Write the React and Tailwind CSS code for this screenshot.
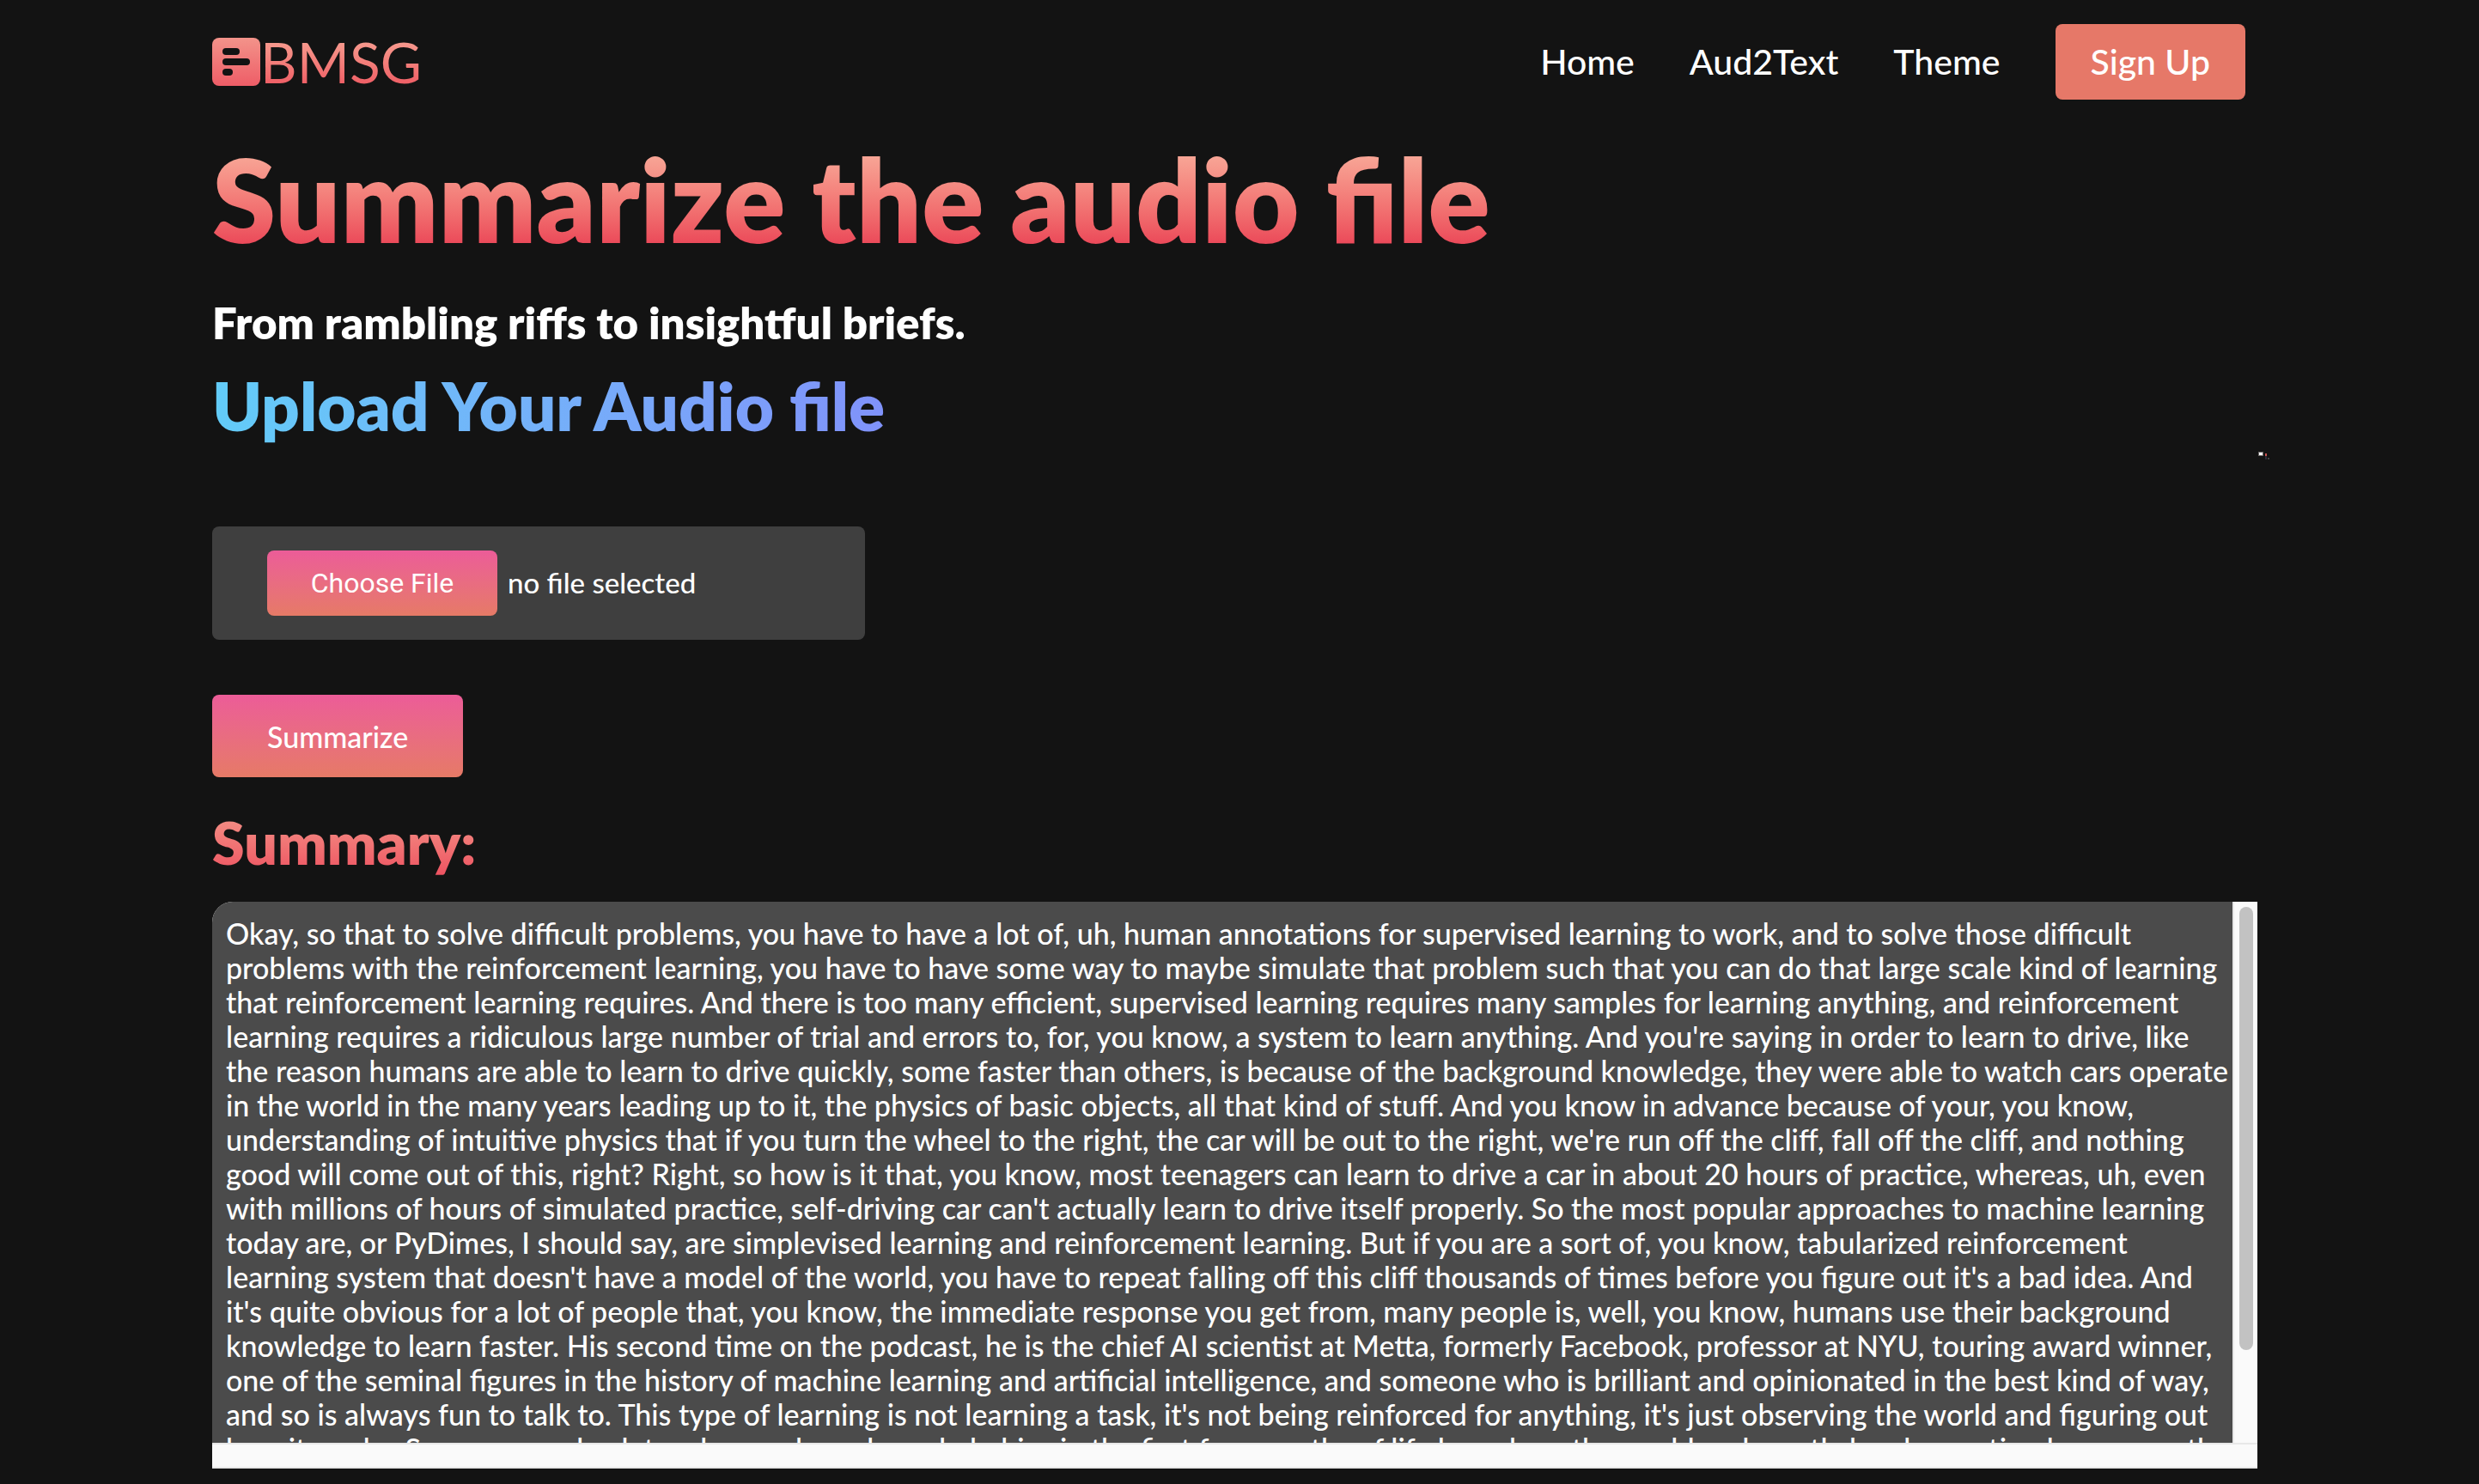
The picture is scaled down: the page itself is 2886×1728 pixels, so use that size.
import React from "react";

const summary = [
  "Okay, so that to solve difficult problems, you have to have a lot of, uh, human annotations for supervised learning to work, and to solve those difficult",
  "problems with the reinforcement learning, you have to have some way to maybe simulate that problem such that you can do that large scale kind of learning",
  "that reinforcement learning requires. And there is too many efficient, supervised learning requires many samples for learning anything, and reinforcement",
  "learning requires a ridiculous large number of trial and errors to, for, you know, a system to learn anything. And you're saying in order to learn to drive, like",
  "the reason humans are able to learn to drive quickly, some faster than others, is because of the background knowledge, they were able to watch cars operate",
  "in the world in the many years leading up to it, the physics of basic objects, all that kind of stuff. And you know in advance because of your, you know,",
  "understanding of intuitive physics that if you turn the wheel to the right, the car will be out to the right, we're run off the cliff, fall off the cliff, and nothing",
  "good will come out of this, right? Right, so how is it that, you know, most teenagers can learn to drive a car in about 20 hours of practice, whereas, uh, even",
  "with millions of hours of simulated practice, self-driving car can't actually learn to drive itself properly. So the most popular approaches to machine learning",
  "today are, or PyDimes, I should say, are simplevised learning and reinforcement learning. But if you are a sort of, you know, tabularized reinforcement",
  "learning system that doesn't have a model of the world, you have to repeat falling off this cliff thousands of times before you figure out it's a bad idea. And",
  "it's quite obvious for a lot of people that, you know, the immediate response you get from, many people is, well, you know, humans use their background",
  "knowledge to learn faster. His second time on the podcast, he is the chief AI scientist at Metta, formerly Facebook, professor at NYU, touring award winner,",
  "one of the seminal figures in the history of machine learning and artificial intelligence, and someone who is brilliant and opinionated in the best kind of way,",
  "and so is always fun to talk to. This type of learning is not learning a task, it's not being reinforced for anything, it's just observing the world and figuring out",
  "how it works. So you come back to a human learn how do babies in the first few months of life learn how the world and mostly by observation how come the",
].join("\n");

function Logo() {
  return (
    <a href="#home" className="flex items-center">
      <svg viewBox="0 0 56 56" className="size-14" aria-hidden="true">
        <defs>
          <linearGradient id="mark" x1="0" y1="0" x2="0" y2="1">
            <stop offset="0" stopColor="#f3938a" />
            <stop offset="1" stopColor="#ee5d67" />
          </linearGradient>
        </defs>
        <rect width="56" height="56" rx="8" fill="url(#mark)" />
        <rect x="12" y="12" width="20" height="8" rx="4" fill="#131313" />
        <rect x="12" y="24" width="32" height="8" rx="4" fill="#131313" />
        <rect x="12" y="36" width="12" height="8" rx="4" fill="#131313" />
      </svg>
      <span className="bg-linear-to-b from-[#f8ac9c] to-[#eb4a5a] bg-clip-text text-[66px] leading-20 font-normal text-transparent">
        BMSG
      </span>
    </a>
  );
}

function Spark() {
  return (
    <svg
      viewBox="0 0 13 9"
      className="absolute top-[382px] -right-3.5 h-[9px] w-[13px]"
      aria-hidden="true"
    >
      <rect width="6" height="5" fill="#6b6868" />
      <rect x="1" y="1" width="4" height="3" fill="#fff" />
      <rect x="8" y="2" width="2" height="3" fill="#c9524f" />
      <rect x="8" y="5" width="2" height="4" fill="#2c2c38" />
      <rect x="11" y="7" width="2" height="2" fill="#444" />
    </svg>
  );
}

export default function App() {
  return (
    <div className="min-h-screen bg-[#131313] pr-[258px] pl-[247px] font-[Lato,sans-serif] font-medium text-white">
      <header className="flex h-36 items-center justify-between pr-3.5">
        <Logo />
        <nav className="flex items-center gap-16 text-[41px] leading-12">
          <a href="#home">Home</a>
          <a href="#aud2text">Aud2Text</a>
          <a href="#theme">Theme</a>
          <a href="#signup" className="rounded-lg bg-[#e67868] px-[41px] py-5">
            Sign Up
          </a>
        </nav>
      </header>

      <main className="relative flex flex-col items-start">
        <Spark />
        <h1 className="mt-2 bg-linear-to-b from-[#f8b09e] from-10% to-[#ea4457] to-85% bg-clip-text text-[134px] leading-40 font-extrabold text-transparent">
          Summarize the audio file
        </h1>
        <p className="mt-8 text-[51px] leading-16 font-extrabold">
          From rambling riffs to insightful briefs.
        </p>
        <h2 className="mt-4 bg-linear-to-r from-[#62ccf8] to-[#8092fa] bg-clip-text text-[78px] leading-24 font-extrabold text-transparent">
          Upload Your Audio file
        </h2>

        <label className="mt-[93px] flex h-33 w-190 cursor-pointer items-center gap-3 rounded-lg bg-[#3f3f3f] px-16 text-[33px]">
          <input type="file" className="sr-only" />
          <span className="flex h-19 w-67 items-center justify-center rounded-lg bg-linear-to-b from-[#ec5c98] to-[#e67a66] font-[Roboto,sans-serif] text-[32px] font-normal">
            Choose File
          </span>
          <span>no file selected</span>
        </label>

        <button
          type="button"
          className="mt-16 h-24 rounded-lg bg-linear-to-b from-[#ec5c98] to-[#e67a66] px-16 text-[34px]"
        >
          Summarize
        </button>

        <label
          htmlFor="summary"
          className="mt-9 bg-linear-to-b from-[#f3968b] to-[#ed5060] bg-clip-text text-[68px] leading-20 font-extrabold text-transparent"
        >
          Summary:
        </label>
        <div className="mt-[29px] grid h-165 w-full grid-cols-[1fr_29px] grid-rows-[1fr_30px] overflow-hidden rounded-tl-3xl bg-[#fafafa]">
          <textarea
            id="summary"
            readOnly
            wrap="off"
            defaultValue={summary}
            className="size-full resize-none overflow-hidden bg-[#4b4b4b] px-4 pt-[17px] text-[34px] leading-10 outline-none"
          />
          <div className="border-l-2 border-[#e8e8e8] pt-1.5 pl-1.5">
            <div className="h-129 w-4 rounded-full bg-[#c2c2c2]" />
          </div>
          <div className="col-span-2 border-y-2 border-[#e8e8e8]" />
        </div>
      </main>
    </div>
  );
}
